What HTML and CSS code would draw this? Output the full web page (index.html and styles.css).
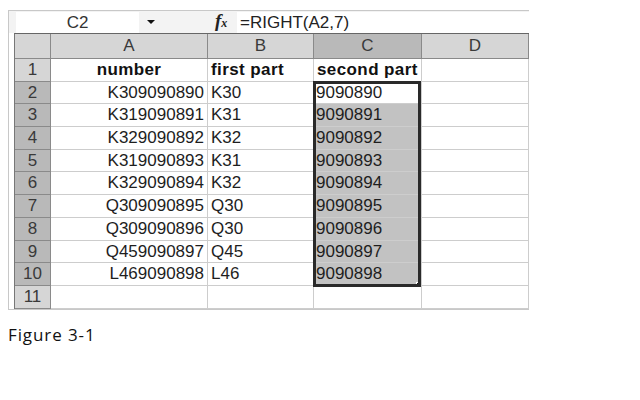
FILE: index.html
```html
<!DOCTYPE html>
<html lang="en">
<head>
  <meta charset="UTF-8">
  <title>Figure 3-1</title>
  <link rel="stylesheet" href="styles.css">
</head>
<body>

  <div class="frame">
    <div class="fbar">
      <div class="namebox">C2</div>
      <div class="drop"><span class="arrow"></span></div>
      <div class="fx"><i>f</i><span>x</span></div>
      <div class="formula">=RIGHT(A2,7)</div>
    </div>

    <div class="sheet">
      <div class="hd corner"></div>
      <div class="hd">A</div>
      <div class="hd">B</div>
      <div class="hd on">C</div>
      <div class="hd">D</div>

      <div class="rh">1</div>
      <div class="cell title">number</div>
      <div class="cell title left">first part</div>
      <div class="cell title left">second part</div>
      <div class="cell"></div>

      <div class="rh on">2</div>
      <div class="cell num">K309090890</div>
      <div class="cell">K30</div>
      <div class="cell pick active">9090890</div>
      <div class="cell"></div>

      <div class="rh on">3</div>
      <div class="cell num">K319090891</div>
      <div class="cell">K31</div>
      <div class="cell pick">9090891</div>
      <div class="cell"></div>

      <div class="rh on">4</div>
      <div class="cell num">K329090892</div>
      <div class="cell">K32</div>
      <div class="cell pick">9090892</div>
      <div class="cell"></div>

      <div class="rh on">5</div>
      <div class="cell num">K319090893</div>
      <div class="cell">K31</div>
      <div class="cell pick">9090893</div>
      <div class="cell"></div>

      <div class="rh on">6</div>
      <div class="cell num">K329090894</div>
      <div class="cell">K32</div>
      <div class="cell pick">9090894</div>
      <div class="cell"></div>

      <div class="rh on">7</div>
      <div class="cell num">Q309090895</div>
      <div class="cell">Q30</div>
      <div class="cell pick">9090895</div>
      <div class="cell"></div>

      <div class="rh on">8</div>
      <div class="cell num">Q309090896</div>
      <div class="cell">Q30</div>
      <div class="cell pick">9090896</div>
      <div class="cell"></div>

      <div class="rh on">9</div>
      <div class="cell num">Q459090897</div>
      <div class="cell">Q45</div>
      <div class="cell pick">9090897</div>
      <div class="cell"></div>

      <div class="rh on">10</div>
      <div class="cell num">L469090898</div>
      <div class="cell">L46</div>
      <div class="cell pick">9090898</div>
      <div class="cell"></div>

      <div class="rh">11</div>
      <div class="cell"></div>
      <div class="cell"></div>
      <div class="cell"></div>
      <div class="cell"></div>

      <!-- selected range C2:C10 -->
      <div class="selection"><span class="handle"></span></div>
    </div>
  </div>

  <p class="caption">Figure 3-1</p>

</body>
</html>
```

FILE: styles.css
```css
html, body {
  margin: 0;
  padding: 0;
  background: #fff;
  font-family: 'Liberation Sans', Arial, sans-serif;
  color: #222;
}

.frame {
  margin: 10px 0 0 8px;
  width: 520px;
  border-left: 1px solid #c8c8c8;
  border-top: 1px solid #c8c8c8;
  border-bottom: 1px solid #c8c8c8;
}

/* formula bar */
.fbar {
  display: flex;
  align-items: center;
  height: 22px;
  background: #f3f3f3;
}

.namebox {
  margin-left: 7px;
  width: 123px;
  height: 21px;
  background: #fff;
  text-align: center;
  font-size: 17px;
  line-height: 21px;
  color: #333;
}

.drop {
  width: 76px;
  height: 21px;
  display: flex;
  align-items: center;
  padding-left: 8px;
  box-sizing: border-box;
}

.arrow {
  width: 0;
  height: 0;
  border-left: 4px solid transparent;
  border-right: 4px solid transparent;
  border-top: 4px solid #111;
}

.fx {
  width: 22px;
  font-family: 'Liberation Serif', serif;
  font-size: 19px;
  font-weight: bold;
  line-height: 21px;
  color: #222;
}

.fx span {
  font-size: 12px;
  font-style: italic;
}

.formula {
  flex: 1;
  height: 21px;
  background: #fff;
  padding-left: 3px;
  font-size: 17px;
  line-height: 21px;
  color: #222;
}

/* grid */
.sheet {
  position: relative;
  margin-left: 5px;
  width: 515px;
  box-sizing: border-box;
  border-top: 1px solid #666;
  border-left: 1px solid #777;
  display: grid;
  grid-template-columns: 36px 157px 106px 108px 107px;
  grid-template-rows: 25px repeat(11, 22.7px);
  font-size: 17px;
}

.sheet > div {
  box-sizing: border-box;
  overflow: hidden;
  white-space: nowrap;
}

.hd, .rh {
  background: #d6d6d6;
  border-right: 1px solid #8a8a8a;
  border-bottom: 1px solid #8a8a8a;
  color: #3a3a3a;
  text-align: center;
  line-height: 23px;
}

.rh {
  line-height: 21px;
}

.hd.on, .rh.on {
  background: #b9b9b9;
}

.hd:last-child {
  border-right: none;
}

.cell {
  border-right: 1px solid #cdcdcd;
  border-bottom: 1px solid #cdcdcd;
  padding: 0 3px;
  line-height: 21px;
  color: #1e1e1e;
}

.cell.num {
  text-align: right;
}

.cell.title {
  font-weight: bold;
  text-align: center;
  letter-spacing: 0.4px;
  color: #111;
}

.cell.title.left {
  text-align: left;
}

.cell.pick {
  background: #c2c2c2;
  padding-left: 2px;
}

.cell.pick.active {
  background: #fff;
}

.selection {
  position: absolute;
  left: 298px;
  top: 47px;
  width: 108px;
  height: 206px;
  box-sizing: border-box;
  border: 3px solid #2a2a2a;
}

.handle {
  position: absolute;
  right: -6px;
  bottom: -6px;
  width: 6px;
  height: 6px;
  background: #1a1a1a;
  border: 1px solid #fff;
}

.caption {
  margin: 13px 0 0 8px;
  font-family: 'Open Sans', sans-serif;
  font-size: 17px;
  letter-spacing: 0.9px;
  color: #111;
}
```
